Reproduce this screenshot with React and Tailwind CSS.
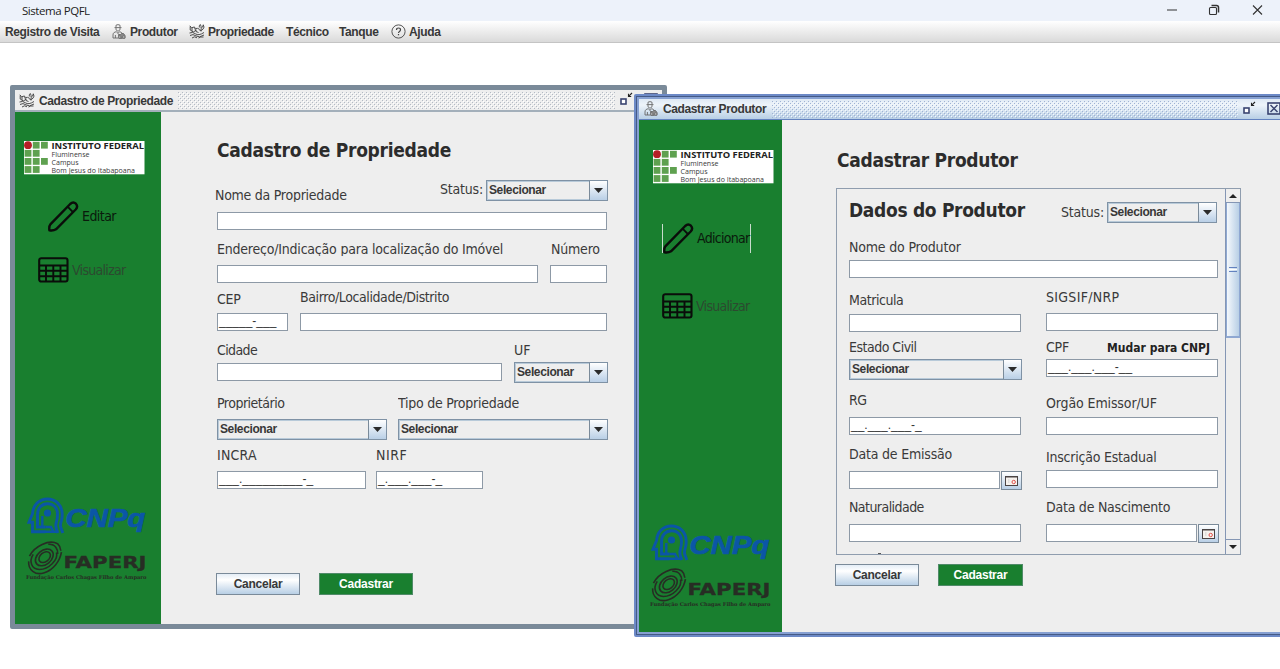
import React from 'react';

const ui = 'font-["Liberation_Sans",Arial,sans-serif] font-bold text-[12px] tracking-[-0.38px] text-[#383838]';

function FarmerIcon({ className }) {
  return (
    <svg className={className} width="14" height="15" viewBox="0 0 14 15" fill="none" stroke="#666" strokeWidth="0.9">
      <path d="M2.500 3.600h7M4 3.400V1.200q2-1.200 4 0v2.200M4 4v1.800q2 3 4 0V4M4.600 7.600C2 8.200 1 9 1 11v3h9M7.400 7.600q2 .5 2.600 1.600M3.400 14v-3M4.800 8l1.200 1.600L7.200 8" />
      <path d="M6.500 10.500h2l1-1h2l1.500 2v2.700H7z" fill="#888" />
      <circle cx="7.800" cy="13" r="1.200" fill="#ddd" />
      <circle cx="11.800" cy="13" r="1.200" fill="#ddd" />
    </svg>
  );
}

function FarmIcon({ className }) {
  return (
    <svg className={className} width="16" height="15" viewBox="0 0 16 15" fill="none" stroke="#444" strokeWidth="0.95">
      <path d="M.8 1.800l1.800 2 2.600-.8 1.600 1.500 2-.2M1.200 2.500v3.500l3 2 3.500-2M3 4v3M5.500 3.500l1.500 4 2.500 1" />
      <path d="M12 7.500V5M10.300 3.500q-.5-2 1-3Q12.500 2 12 4.500 14 3.500 14.300.8q1.500 2.500-.3 4.400L12 6.600M9.500 4.200q.2 1.900 2.400 2.500" />
      <path d="M.5 9q3-1.500 6 .8t8.500-1.300M1 11.500q3-2 6 .4t8-.9M3 14q2.500-2.300 5-.2M9.500 14q2-1.500 5-1" />
    </svg>
  );
}

function Bumps({ id, color, light, className }) {
  return (
    <svg className={className} width="100%" height="17" shapeRendering="crispEdges">
      <defs>
        <pattern id={id} width="4" height="4" patternUnits="userSpaceOnUse">
          <rect width="1" height="1" fill={color} />
          <rect x="2" y="2" width="1" height="1" fill={color} />
          <rect x="1" y="1" width="1" height="1" fill={light} />
          <rect x="3" y="3" width="1" height="1" fill={light} />
        </pattern>
      </defs>
      <rect width="100%" height="17" fill={`url(#${id})`} />
    </svg>
  );
}

function RestoreIcon({ className }) {
  return (
    <svg className={className} width="13" height="14" viewBox="0 0 13 14" fill="none">
      <rect x="1" y="7" width="5" height="5" fill="#fff" stroke="#3a4470" strokeWidth="1.600" />
      <path d="M12 1L8.800 4.200M8.500 1.800v2.700h2.700" stroke="#222" strokeWidth="1.100" />
    </svg>
  );
}

function CloseBox({ className }) {
  return (
    <svg className={className} width="14" height="13" viewBox="0 0 14 13" fill="none" stroke="#3a4470">
      <rect x="1" y="1" width="12" height="11" strokeWidth="1.600" />
      <path d="M3.500 3l7 7M10.500 3l-7 7" strokeWidth="1.500" />
    </svg>
  );
}

function InstitutoLogo() {
  const cells = [[1, 0], [2, 0], [0, 1], [1, 1], [0, 2], [1, 2], [2, 2], [0, 3], [1, 3]];
  return (
    <svg width="121" height="34" viewBox="0 0 121 34" className="shrink-0 overflow-visible">
      <rect width="120.500" height="33.300" fill="#fff" />
      {cells.map(([x, y]) => (
        <rect key={`${x}-${y}`} x={0.6 + x * 8.2} y={0.8 + y * 8.1} width="6.800" height="6.800" fill="#5fa150" />
      ))}
      <circle cx="4" cy="4.200" r="3.900" fill="#b51f26" />
      <g fontFamily='"Open Sans", sans-serif' fill="#3b3b3b">
        <text x="27.500" y="8" fontSize="9.500" fontWeight="700" fill="#222" textLength="92.500" lengthAdjust="spacingAndGlyphs">INSTITUTO FEDERAL</text>
        <text x="27.500" y="15.800" fontSize="7.200" textLength="38" lengthAdjust="spacingAndGlyphs">Fluminense</text>
        <text x="27.500" y="23.800" fontSize="7.200" textLength="27" lengthAdjust="spacingAndGlyphs">Campus</text>
        <text x="27.500" y="31.600" fontSize="7.200" textLength="83.500" lengthAdjust="spacingAndGlyphs">Bom Jesus do Itabapoana</text>
      </g>
    </svg>
  );
}

function CnpqLogo() {
  return (
    <svg width="120" height="38" viewBox="0 0 120 38" className="shrink-0">
      <g fill="none" stroke="#0b56a6" strokeWidth="2.900">
        <path d="M35.800 36l-2-5.500q-.8-3 .5-6.500 1-3 .9-7C35 8 28.500 2 20.500 2 11.500 2 6 8.500 5.600 16.500L2 25.300h3.500v9.500h13" />
        <path d="M30.800 36l-1.700-5q-.7-3 .4-6.500 1-3 1-7.500c0-6-4-10.300-9.800-10.300-6.200 0-10.200 4.300-10.200 11V30h8" />
        <path d="M15.300 30V19M26.500 35l-2.500-5h-5.500M18 34.700h12" strokeWidth="2.400" />
      </g>
      <circle cx="20.500" cy="16" r="3.600" fill="#0b56a6" />
      <text x="38.500" y="29.500" fontFamily='"Liberation Sans", Arial, sans-serif' fontSize="26.500" fontWeight="700" fontStyle="italic" fill="#0b56a6" stroke="#0b56a6" strokeWidth="0.700" textLength="80" lengthAdjust="spacingAndGlyphs">CNPq</text>
    </svg>
  );
}

function FaperjLogo() {
  return (
    <svg width="121" height="38" viewBox="0 0 121 38" className="shrink-0 overflow-visible">
      <g fill="none" stroke="#272d24" strokeWidth="1.600" transform="rotate(-40 19 14.500)">
        <ellipse cx="19" cy="14" rx="6.500" ry="4.500" />
        <ellipse cx="18.500" cy="14" rx="10" ry="7" />
        <path d="M31 18C28 25 14 26 7 20 1 15 4 7 12 4.500" />
        <path d="M8 3.500C18-1 34 3 37.500 12M37.500 12q.5 4-2 7.500" />
        <path d="M4 7C-2 13 0 22 8 25.500 17 29.500 28 27 35 21" />
        <path d="M30 6.500C36 11 34 17 31 20" />
      </g>
      <text x="37.500" y="25.300" fontFamily='"DejaVu Sans", sans-serif' fontSize="16.500" fontWeight="700" fill="#272d24" stroke="#272d24" strokeWidth="0.300" textLength="83" lengthAdjust="spacingAndGlyphs">FAPERJ</text>
      <text x="0" y="35.500" fontFamily='"DejaVu Serif", serif' fontSize="5.200" fontWeight="700" fill="#272d24" textLength="120.500" lengthAdjust="spacingAndGlyphs">Fundação Carlos Chagas Filho de Amparo</text>
    </svg>
  );
}

function PencilIcon() {
  return (
    <svg width="31" height="31" viewBox="0 0 31 31" fill="none" stroke="#0a0d0a" strokeWidth="2.400" strokeLinejoin="round" className="shrink-0">
      <path d="M1.400 29.300q-.6-4 1.200-6.200L22.200 3q3-2.800 5.700-.3 2.500 2.800-.2 5.800L8 28.300q-2.500 1.600-6.600 1Z" />
      <path d="M19.600 5.700l5.600 5.600" strokeWidth="1.900" />
    </svg>
  );
}

function TableIcon() {
  return (
    <svg width="31" height="26" viewBox="0 0 31 26" fill="none" stroke="#0a0d0a" strokeWidth="2.100" className="shrink-0">
      <rect x="1.200" y="1.200" width="28.300" height="23.300" rx="2" />
      <path d="M1 8.500h29M1 13.700h29M1 19.200h29M8 8.500v16M15.300 8.500v16M22.500 8.500v16" strokeWidth="1.900" />
    </svg>
  );
}

function Label({ className = '', children }) {
  return (
    <div className={`whitespace-nowrap font-["DejaVu_Sans_Condensed",Tahoma,sans-serif] text-[14px] leading-[17px] text-[#3a3a3a] ${className}`}>
      {children}
    </div>
  );
}

function Title({ className = '', children }) {
  return (
    <h1 className={`whitespace-nowrap font-["DejaVu_Sans_Condensed",Tahoma,sans-serif] text-[19px] font-bold leading-6 text-[#2c2c2c] ${className}`}>
      {children}
    </h1>
  );
}

function Field({ className = '', children }) {
  return (
    <div className={`h-[18px] shrink-0 whitespace-pre border border-[#8d99a6] bg-white pl-px font-["Liberation_Sans",Arial,sans-serif] text-[12px] leading-[15px] text-[#333] ${className}`}>
      {children}
    </div>
  );
}

function Select({ className = '' }) {
  return (
    <div className={`flex h-[21px] shrink-0 border border-[#7f92a5] bg-[#eee] shadow-[inset_0_0_0_1px_#b8cad9] ${className}`}>
      <span className={`${ui} flex-1 pl-[2px] leading-[18px]`}>Selecionar</span>
      <span className="flex w-[18px] items-center justify-center border-l border-[#7a8a99] bg-linear-to-b from-white to-[#b9cfe6]">
        <svg width="9" height="5" viewBox="0 0 9 5"><path d="M0 0h9L4.500 5z" fill="#2b2b2b" /></svg>
      </span>
    </div>
  );
}

function DateField() {
  return (
    <div className="flex">
      <Field className="w-[151px]" />
      <button className="ml-px flex h-[19px] w-[21px] items-center justify-center border border-[#7a8a99] bg-linear-to-b from-white to-[#b9cfe6]">
        <svg width="13" height="10" viewBox="0 0 13 10">
          <rect x=".5" y=".5" width="12" height="9" fill="#f6f2ee" stroke="#4b4444" />
          <path d="M0 1h13" stroke="#4b4444" />
          <circle cx="8.700" cy="6" r="1.700" fill="none" stroke="#e2524c" />
          <path d="M3 4h1.500M3 6h1.500" stroke="#ccc" />
        </svg>
      </button>
    </div>
  );
}

function Buttons({ className = '', okWidth }) {
  return (
    <div className={`-ml-px flex ${className}`}>
      <button className={`h-[22px] w-[84px] border border-[#7a8a99] bg-linear-to-b from-[#e4edf6] via-white via-30% to-[#b8cfe5] font-["Liberation_Sans",Arial,sans-serif] text-[12px] font-bold leading-[20px] tracking-[-0.250px] text-[#383838]`}>Cancelar</button>
      <button className={`ml-[19px] h-[22px] border border-[#4f8a68] bg-[#197f2f] font-["Liberation_Sans",Arial,sans-serif] text-[12px] font-bold leading-[20px] tracking-[-0.250px] text-white ${okWidth}`}>Cadastrar</button>
    </div>
  );
}

function MenuItem({ className = '', children }) {
  return <div className={`flex items-center whitespace-nowrap ${className}`}>{children}</div>;
}

function PropertyWindow() {
  return (
    <section className="absolute left-[10px] top-[85px] flex h-[544px] w-[657px] flex-col rounded-[2px] border-[5px] border-[#7a8a99] bg-[#eee]">
      <header className="flex h-[22px] shrink-0 border-b-2 border-[#a3afba]">
        <FarmIcon className="ml-[4px] mt-[3px] shrink-0" />
        <span className={`${ui} ml-[4px] w-[134px] whitespace-nowrap leading-[22px]`}>Cadastro de Propriedade</span>
        <Bumps id="bumps-a" color="#b3bac4" light="#fff" className="ml-[5px] mt-[2px] min-w-0 flex-1" />
        <RestoreIcon className="ml-[5px] mt-[2px] shrink-0" />
        <CloseBox className="ml-[11px] mr-[4px] mt-[3px] shrink-0" />
      </header>
      <div className="flex min-h-0 flex-1">
        <aside className="flex w-[146px] shrink-0 flex-col bg-[#197f2f] pt-[29px]">
          <div className="pl-[9px]"><InstitutoLogo /></div>
          <div className="mt-[26px] flex items-center pl-[33px]">
            <PencilIcon />
            <Label className="ml-[3px] tracking-[-0.550px] !text-[#0a1a0c]">Editar</Label>
          </div>
          <div className="mt-[25px] flex items-center pl-[23px]">
            <TableIcon />
            <Label className="ml-[3px] tracking-[-0.700px] !text-[#2c4a30]">Visualizar</Label>
          </div>
          <div className="mt-auto flex flex-col pb-[43px] pl-[12px]">
            <CnpqLogo />
            <div className="-ml-px mt-[8px]"><FaperjLogo /></div>
          </div>
        </aside>
        <form className="flex flex-col pl-[56px] pt-[26px]">
          <Title className="tracking-[-0.280px]">Cadastro de Propriedade</Title>
          <div className="mt-[18px] flex h-8 items-start">
            <Label className="-ml-[2px] mt-[7px] h-[15px] w-[225px] overflow-hidden tracking-[-0.260px]">Nome da Propriedade</Label>
            <Label className="mt-px w-[46px] tracking-[-0.200px]">Status:</Label>
            <Select className="w-[122px]" />
          </div>
          <Field className="w-[390px]" />
          <div className="mt-[11px] flex h-6 items-start">
            <Label className="h-[15px] w-[334px] overflow-hidden tracking-[-0.210px]">Endereço/Indicação para localização do Imóvel</Label>
            <Label className="tracking-[-0.200px]">Número</Label>
          </div>
          <div className="flex gap-[12px]"><Field className="w-[321px]" /><Field className="w-[57px]" /></div>
          <div className="flex h-[30px] items-start">
            <Label className="mt-[8px] w-[83px] tracking-[-0.300px]">CEP</Label>
            <Label className="mt-[6px] tracking-[-0.400px]">Bairro/Localidade/Distrito</Label>
          </div>
          <div className="flex gap-[12px]"><Field className="w-[71px]">_____-___</Field><Field className="w-[307px]" /></div>
          <div className="mt-[11px] flex h-5">
            <Label className="w-[297px] tracking-[-0.600px]">Cidade</Label>
            <Label>UF</Label>
          </div>
          <div className="flex gap-[12px]"><Field className="mt-px w-[285px]" /><Select className="w-[94px]" /></div>
          <div className="mt-[12px] flex h-6 items-start">
            <Label className="h-[15px] w-[181px] overflow-hidden tracking-[-0.500px]">Proprietário</Label>
            <Label className="h-[15px] overflow-hidden tracking-[-0.260px]">Tipo de Propriedade</Label>
          </div>
          <div className="flex gap-[11px]"><Select className="w-[170px]" /><Select className="w-[210px]" /></div>
          <div className="mt-[7px] flex h-6">
            <Label className="w-[159px] tracking-[0.200px]">INCRA</Label>
            <Label className="tracking-[0.500px]">NIRF</Label>
          </div>
          <div className="flex gap-[10px]"><Field className="w-[149px]">___._________-_</Field><Field className="w-[107px]">_.___.___-_</Field></div>
          <Buttons className="mt-[84px]" okWidth="w-[94px]" />
        </form>
      </div>
    </section>
  );
}

function ScrollBar() {
  return (
    <div className="flex w-[15px] shrink-0 flex-col border-l border-[#8496b4]">
      <div className="flex h-[14px] items-center justify-center border-b border-[#8496b4]">
        <svg width="8" height="4" viewBox="0 0 8 4"><path d="M0 4h8L4 0z" fill="#222" /></svg>
      </div>
      <div className="flex h-[135px] flex-col items-center justify-center gap-px border-b-2 border-l border-r border-[#8fa8d2] bg-linear-to-r from-[#f4f8fc] to-[#b8cfe5]">
        <i className="h-px w-2 bg-[#6382bf]" />
        <i className="h-px w-2 bg-white" />
        <i className="h-px w-2 bg-[#6382bf]" />
      </div>
      <div className="mt-auto flex h-[15px] items-center justify-center border-t border-[#8496b4]">
        <svg width="8" height="4" viewBox="0 0 8 4"><path d="M0 0h8L4 4z" fill="#222" /></svg>
      </div>
    </div>
  );
}

function ProducerWindow() {
  return (
    <section className="absolute left-[634px] top-[94px] h-[543px] w-[656px] rounded-[2px] border-2 border-[#6c89c6]">
      <div className="h-full border border-[#455a86]">
        <div className="flex h-full flex-col border-2 border-[#86a0d2] bg-[#eee]">
          <header className="flex h-[21px] shrink-0 border-b border-[#6382bf] bg-linear-to-b from-[#dfe9f4] via-[#eef4fa] via-30% to-[#b8cfe5]">
            <FarmerIcon className="ml-[5px] mt-[2px] shrink-0" />
            <span className={`${ui} ml-[5px] w-[103px] whitespace-nowrap leading-[21px]`}>Cadastrar Produtor</span>
            <Bumps id="bumps-b" color="#a0b3d4" light="#f4f8fd" className="ml-[6px] mt-[2px] min-w-0 flex-1" />
            <RestoreIcon className="ml-[5px] mt-[2px] shrink-0" />
            <CloseBox className="ml-[11px] mr-[4px] mt-[3px] shrink-0" />
          </header>
          <div className="flex min-h-0 flex-1">
            <aside className="flex w-[143px] shrink-0 flex-col bg-[#197f2f] pt-[30px]">
              <div className="pl-[14px]"><InstitutoLogo /></div>
              <div className="ml-[23px] mt-[40px] flex h-[29px] w-[89px] items-center border-x border-[#c8dccd]">
                <PencilIcon />
                <Label className="ml-[3px] tracking-[-0.700px] !text-[#0a1a0c]">Adicionar</Label>
              </div>
              <div className="mt-[40px] flex items-center pl-[23px]">
                <TableIcon />
                <Label className="ml-[3px] tracking-[-0.700px] !text-[#2c4a30]">Visualizar</Label>
              </div>
              <div className="mt-auto flex flex-col pb-[24px] pl-[12px]">
                <CnpqLogo />
                <div className="-ml-px mt-[8px]"><FaperjLogo /></div>
              </div>
            </aside>
            <form className="flex flex-col pl-[54px] pt-[28px]">
              <Title className="ml-px tracking-[-0.300px]">Cadastrar Produtor</Title>
              <div className="mt-[16px] flex h-[367px] w-[405px] border border-[#8f9dae]">
                <div className="flex min-w-0 flex-1 flex-col overflow-hidden pl-[12px] pt-[9px]">
                  <div className="flex h-[41px] items-start">
                    <Title className="w-[212px] tracking-[-0.320px]">Dados do Produtor</Title>
                    <Label className="mt-[6px] w-[46px] tracking-[-0.200px]">Status:</Label>
                    <Select className="mt-[4px] w-[110px]" />
                  </div>
                  <Label className="h-[21px] tracking-[-0.180px]">Nome do Produtor</Label>
                  <Field className="w-[369px]" />
                  <div className="flex gap-[24px]">
                    <div className="flex w-[173px] flex-col">
                      <Label className="mt-[14px] h-[22px] tracking-[-0.450px]">Matricula</Label>
                      <Field className="w-[172px]" />
                      <Label className="mt-[7px] h-5 tracking-[-0.500px]">Estado Civil</Label>
                      <Select className="w-[173px]" />
                      <Label className="mt-[12px] h-[25px] tracking-[-0.500px]">RG</Label>
                      <Field className="w-[172px]">__.___.___-_</Field>
                      <Label className="mt-[11px] h-[25px] tracking-[-0.200px]">Data de Emissão</Label>
                      <DateField />
                      <Label className="mt-[9px] h-[25px] tracking-[-0.550px]">Naturalidade</Label>
                      <Field className="w-[172px]" />
                      <i className="ml-[29px] mt-[11px] h-px w-[3px] bg-[#555]" />
                    </div>
                    <div className="flex w-[173px] flex-col">
                      <Label className="mt-[11px] h-6 tracking-[0.300px]">SIGSIF/NRP</Label>
                      <Field className="w-[172px]" />
                      <div className="mt-[8px] flex h-5 items-start">
                        <Label className="w-[61px] tracking-[-0.200px]">CPF</Label>
                        <span className='whitespace-nowrap font-["DejaVu_Sans_Condensed",Tahoma,sans-serif] text-[12px] font-bold leading-[18px] tracking-[0.020px] text-[#222]'>Mudar para CNPJ</span>
                      </div>
                      <Field className="w-[172px]">___.___.___-__</Field>
                      <Label className="mt-[18px] h-[22px] tracking-[-0.120px]">Orgão Emissor/UF</Label>
                      <Field className="w-[172px]" />
                      <Label className="mt-[14px] h-[21px] tracking-[-0.230px]">Inscrição Estadual</Label>
                      <Field className="w-[172px]" />
                      <Label className="mt-[11px] h-[25px] tracking-[-0.240px]">Data de Nascimento</Label>
                      <DateField />
                    </div>
                  </div>
                </div>
                <ScrollBar />
              </div>
              <Buttons className="mt-[9px]" okWidth="w-[85px]" />
            </form>
          </div>
        </div>
      </div>
    </section>
  );
}

export default function App() {
  return (
    <div className="relative h-[669px] w-[1280px] overflow-hidden bg-white">
      <div className="flex h-[21px] items-center justify-between bg-[#edf2fa] pl-[22px] pr-[16px]">
        <span className='font-["Open_Sans",sans-serif] text-[11.5px] leading-5 tracking-[-0.450px] text-[#222]'>Sistema PQFL</span>
        <svg width="98" height="12" viewBox="0 0 98 12" fill="none" stroke="#333" strokeWidth="1.100" className="mb-[2px]">
          <path d="M1 6h10M87 1.500l9 9M96 1.500l-9 9" />
          <rect x="43.500" y="3.500" width="7" height="7" rx="1" />
          <path d="M45.500 1.500h5q2 0 2 2v5" strokeWidth="1.500" />
        </svg>
      </div>
      <nav className={`${ui} flex h-[22px] items-center border-b border-[#c4c4c4] bg-linear-to-b from-white to-[#dadada] pl-[5px]`}>
        <MenuItem className="w-[107px]">Registro de Visita</MenuItem>
        <MenuItem className="w-[77px]"><FarmerIcon className="mr-[4px]" />Produtor</MenuItem>
        <MenuItem className="w-[97px]"><FarmIcon className="mr-[3px]" />Propriedade</MenuItem>
        <MenuItem className="w-[53px]">Técnico</MenuItem>
        <MenuItem className="w-[52px]">Tanque</MenuItem>
        <MenuItem>
          <svg className="mr-[3px]" width="15" height="15" viewBox="0 0 15 15" fill="none" stroke="#444">
            <circle cx="7.500" cy="7.500" r="6.600" strokeWidth="0.900" />
            <path d="M5.500 6q0-2 2-2t2 1.800q0 1-1 1.600t-1 1.600M7.500 10v1.300" strokeWidth="1.200" />
          </svg>
          Ajuda
        </MenuItem>
      </nav>
      <PropertyWindow />
      <ProducerWindow />
    </div>
  );
}
